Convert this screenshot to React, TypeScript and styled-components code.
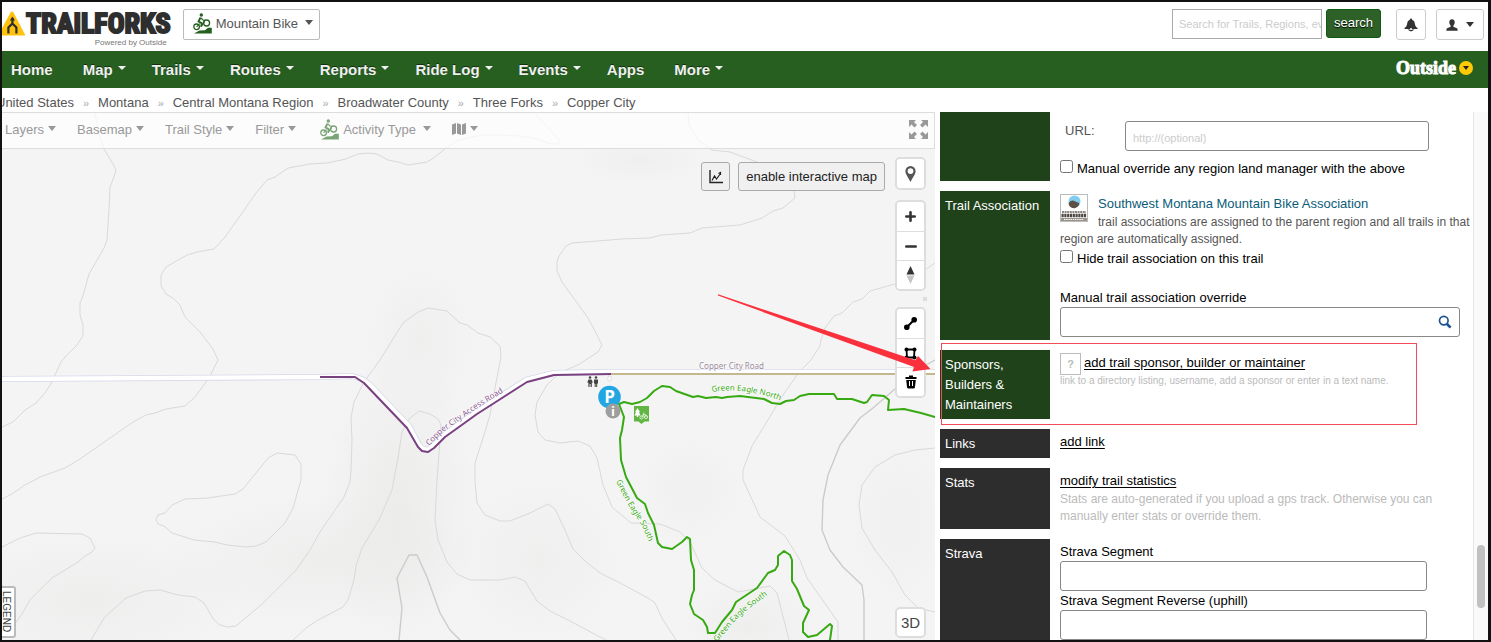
import React from "react";
import styled, { createGlobalStyle } from "styled-components";

const GlobalStyle = createGlobalStyle`
  *, *::before, *::after { box-sizing: border-box; }
  body {
    margin: 0;
    background: #111;
    color: #000;
    font: 13px/20px "Liberation Sans", Arial, sans-serif;
  }
  button, input { font-family: inherit; margin: 0; }
`;

const Page = styled.div`
  display: flex;
  flex-direction: column;
  height: 100vh;
  padding: 2px 3px 2px 2px;
  overflow: hidden;
`;

const Header = styled.header`
  flex: none;
  display: flex;
  align-items: flex-start;
  height: 49px;
  padding-right: 4px;
  background: #fff;
`;

const Brand = styled.a`
  display: grid;
  grid-template-columns: 24px auto;
  padding-top: 9px;
  color: #2e2e2e;
  text-decoration: none;
`;

const BrandName = styled.span`
  font: bold 28px/26px "Liberation Sans Narrow", "Roboto Condensed", "Open Sans Condensed", "DejaVu Sans Condensed", sans-serif;
  -webkit-text-stroke: 2px #2e2e2e;
`;

const BrandNote = styled.small`
  grid-column: 1 / -1;
  padding-right: 4px;
  font-size: 8px;
  line-height: 11px;
  text-align: right;
  color: #777;
`;

const ActivityButton = styled.button`
  display: flex;
  align-items: center;
  gap: 4px;
  height: 31px;
  margin: 7px 0 0 12px;
  padding: 0 6px 2px 9px;
  border: 1px solid #bbb;
  border-radius: 2px;
  background: #fff;
  color: #555;
  font-size: 13px;
`;

const HeaderTools = styled.div`
  display: flex;
  margin: 7px 0 0 auto;
`;

const SearchForm = styled.form`
  display: flex;
  gap: 4px;
  margin-right: 15px;
`;

const SearchInput = styled.input`
  width: 150px;
  height: 30px;
  padding: 0 0 0 6px;
  border: 1px solid #aaa;
  font-size: 11px;
  &::placeholder { color: #ccc; }
`;

const SearchButton = styled.button`
  width: 55px;
  height: 29px;
  padding: 0 0 2px;
  border: 1px solid #0f5a12;
  border-radius: 3px;
  background: #2d6128;
  color: #fff;
  font-size: 13px;
  text-shadow: 0 1px 1px #000;
`;

const IconButton = styled.button<{ $wide?: boolean }>`
  display: flex;
  align-items: center;
  justify-content: center;
  gap: 8px;
  width: ${(p) => (p.$wide ? 48 : 30)}px;
  height: 31px;
  margin-right: ${(p) => (p.$wide ? 0 : 10)}px;
  padding: 0;
  border: 1px solid #ccc;
  border-radius: 3px;
  background: #fff;
  color: #333;
`;

const Nav = styled.nav`
  flex: none;
  display: flex;
  align-items: center;
  height: 37px;
  padding: 0 15px 0 9px;
  background: #265f20;
`;

const NavLink = styled.a<{ $plain?: boolean }>`
  display: flex;
  align-items: center;
  gap: 5px;
  margin-right: ${(p) => (p.$plain ? 30 : 26)}px;
  color: #f0f0f0;
  font-size: 15px;
  font-weight: bold;
  text-decoration: none;
  text-shadow: 0 -1px 0 rgba(0, 0, 0, 0.5);
`;

const Outside = styled.a`
  display: flex;
  align-items: center;
  gap: 3px;
  margin-left: auto;
  padding-bottom: 3px;
  color: #fff;
  font: bold 18px/20px "Liberation Serif", serif;
  -webkit-text-stroke: 1px #fff;
  text-decoration: none;
`;

const OutsideBadge = styled.span`
  display: grid;
  place-items: center;
  width: 14px;
  height: 14px;
  border-radius: 50%;
  background: #ffc906;
  color: #222;
`;

const Caret = styled.span<{ $half?: number; $tall?: number; $lift?: number; $space?: number }>`
  flex: none;
  width: 0;
  height: 0;
  margin-left: ${(p) => p.$space ?? 0}px;
  margin-bottom: ${(p) => p.$lift ?? 0}px;
  border: solid transparent;
  border-width: ${(p) => p.$tall ?? 4}px ${(p) => p.$half ?? 4}px 0;
  border-top-color: currentColor;
`;

const Crumbs = styled.nav`
  flex: none;
  display: flex;
  gap: 9px;
  height: 24px;
  padding-top: 5px;
  background: #fff;
  overflow: hidden;
`;

const Crumb = styled.a`
  color: #555;
  text-decoration: none;
  white-space: nowrap;
  &:first-child { margin-left: -6px; }
`;

const CrumbMark = styled.span`
  width: 6px;
  color: #aaa;
  font-size: 11px;
`;

const Main = styled.main`
  flex: 1;
  min-height: 0;
  display: flex;
  gap: 5px;
  background: #fff;
`;

const MapArea = styled.section`
  position: relative;
  flex: 1;
  min-width: 0;
  background: #f4f4f4;
  overflow: hidden;
`;

const MapDrawing = styled.svg`
  display: block;
  width: 100%;
  height: 100%;
`;

const MapMark = styled.svg`
  position: absolute;
  inset: 0;
  width: 100%;
  height: 100%;
  pointer-events: none;
`;

const MapBar = styled.div`
  position: absolute;
  inset: 0 0 auto 0;
  display: flex;
  align-items: center;
  gap: 21px;
  height: 37px;
  padding: 0 6px 3px 3px;
  border: solid #ddd;
  border-width: 1px 1px 1px 0;
  background: rgba(255, 255, 255, 0.7);
`;

const MapMenu = styled.button<{ $before?: string }>`
  display: flex;
  align-items: center;
  gap: 4px;
  padding: 0;
  border: 0;
  background: none;
  color: #999;
  font-size: 13px;
  margin-left: ${(p) => p.$before ?? "0"};
`;

const MapTools = styled.div`
  position: absolute;
  top: 45px;
  right: 9px;
  display: flex;
  align-items: flex-start;
`;

const FlatButton = styled.button<{ $square?: boolean }>`
  display: grid;
  place-items: center;
  width: ${(p) => (p.$square ? "29px" : "auto")};
  height: 29px;
  margin-top: 5px;
  margin-right: ${(p) => (p.$square ? 8 : 10)}px;
  padding: 0 7px;
  border: 1px solid #aaa;
  border-radius: 3px;
  background: #f0f0f0;
  color: #222;
  font-size: 13px;
`;

const ControlColumn = styled.div`
  display: flex;
  flex-direction: column;
  gap: 10px;
  width: 31px;
`;

const ControlGroup = styled.div<{ $after?: number }>`
  display: flex;
  flex-direction: column;
  margin-bottom: ${(p) => p.$after ?? 0}px;
  border: 2px solid #ddd;
  border-radius: 5px;
  background: #fff;
`;

const Control = styled.button`
  display: grid;
  place-items: center;
  height: 29px;
  padding: 0;
  border: 0;
  border-radius: 4px;
  background: #fff;
  color: #222;
  & + & { border-top: 1px solid #ddd; border-radius: 0 0 4px 4px; }
`;

const ThreeD = styled.button`
  position: absolute;
  right: 9px;
  bottom: 2px;
  width: 31px;
  height: 31px;
  padding: 0;
  border: 2px solid #ddd;
  border-radius: 5px;
  background: #fff;
  color: #444;
  font-size: 15px;
`;

const Legend = styled.button`
  position: absolute;
  left: -6px;
  bottom: 2px;
  height: 52px;
  width: 20px;
  padding: 0;
  border: 2px solid #bbb;
  border-radius: 3px;
  background: #fff;
  color: #444;
  font-size: 10px;
  writing-mode: vertical-rl;
`;

const Panel = styled.section`
  flex: none;
  display: flex;
  width: 548px;
`;

const Rows = styled.form`
  flex: 1;
  display: flex;
  flex-direction: column;
  gap: 10px;
  overflow: hidden;
`;

const Row = styled.div<{ $height: number; $boxed?: boolean }>`
  position: relative;
  flex: none;
  display: grid;
  grid-template-columns: 110px 1fr;
  column-gap: 10px;
  min-height: ${(p) => p.$height}px;
  &::after {
    content: ${(p) => (p.$boxed ? '""' : "none")};
    position: absolute;
    inset: -7px 56px -6px 1px;
    border: 1px solid #f24b57;
  }
`;

const RowTitle = styled.div<{ $green?: boolean }>`
  padding: 5px 5px 4px;
  background: ${(p) => (p.$green ? "#1f421b" : "#2d2d2d")};
  color: #fff;
`;

const RowBody = styled.div<{ $top?: number }>`
  min-width: 0;
  padding: ${(p) => p.$top ?? 3}px 3px 0 0;
`;

const UrlLine = styled.div`
  display: flex;
  padding-left: 5px;
  margin-bottom: 8px;
`;

const UrlLabel = styled.label`
  width: 60px;
  color: #555;
`;

const Input = styled.input<{ $width: number }>`
  display: block;
  width: ${(p) => p.$width}px;
  height: 30px;
  padding: 4px 7px 0;
  border: 1px solid #888;
  border-radius: 3px;
  background: #fff;
  font-size: 11px;
  &::placeholder { color: #ccc; }
`;

const CheckLine = styled.label`
  display: flex;
  gap: 4px;
  line-height: 19px;
  & input { width: 13px; height: 13px; margin-top: 1px; }
`;

const FieldLabel = styled.label<{ $gap?: number }>`
  display: block;
  margin-top: ${(p) => p.$gap ?? 0}px;
  line-height: 19px;
`;

const Association = styled.div`
  margin-bottom: 1px;
  & svg { float: left; margin-right: 10px; }
`;

const AssociationLink = styled.a`
  color: #0b5c78;
  text-decoration: none;
`;

const Note = styled.p<{ $faint?: boolean; $size?: number; $right?: number }>`
  margin: 0;
  padding-right: ${(p) => p.$right ?? 0}px;
  color: ${(p) => (p.$faint ? "#bbb" : "#555")};
  font-size: ${(p) => p.$size ?? 12}px;
  line-height: 17px;
`;

const Finder = styled.div`
  position: relative;
  width: 400px;
`;

const FinderIcon = styled.svg`
  position: absolute;
  top: 8px;
  right: 8px;
`;

const SponsorLine = styled.div`
  display: flex;
  gap: 3px;
  height: 19px;
`;

const HelpButton = styled.button`
  width: 21px;
  height: 22px;
  padding: 0;
  border: 1px solid #bbb;
  background: #fff;
  color: #bbb;
  font-size: 11px;
  font-weight: bold;
`;

const TextLink = styled.a`
  color: #000;
  text-decoration: underline;
  text-underline-offset: 2px;
`;

const ScrollTrack = styled.div`
  flex: none;
  width: 15px;
  padding-left: 3px;
  border-left: 1px solid #e6e6e6;
  background: #fafafa;
`;

const ScrollThumb = styled.div`
  width: 8px;
  height: 63px;
  margin-top: 433px;
  border-radius: 4px;
  background: #c1c1c1;
`;

const BikeIcon = ({ color = "#265f20" }: { color?: string }) => (
  <svg width="19" height="21" viewBox="0 0 19 21" fill="none" stroke={color} aria-hidden="true">
    <circle cx="8.3" cy="2" r="1.7" fill={color} stroke="none" />
    <circle cx="3.6" cy="13.8" r="2.8" strokeWidth="1.3" />
    <circle cx="13.6" cy="10" r="3" strokeWidth="1.3" />
    <path d="M7.6 4.6L5.4 8.4L9 10.4L8 13.6" strokeWidth="1.9" strokeLinejoin="round" />
    <path d="M8 5l2.2 2.2h2.4M3.6 13.8L6.6 10.6M8 13.8l3.8-5.4" strokeWidth="1.1" />
    <path d="M1 20.6L6.5 17.6L12 17.2L15 14.8H18.8V20.6Z" fill={color} stroke="none" />
  </svg>
);

const CONTOURS = [
  "95,112 98,130 104,149 113,164 116,170 114,177 110,187 109,210 107,240 104,248 89,274 83,296 80,303 80,315 83,325 83,336 77,345 66,356 61,362 55,375 52,382 45,393 36,403 25,410 13,422 2,427",
  "534,112 550,130 560,141 558,144 550,144 538,139 520,136 500,135 485,135 470,137 457,141 446,148 435,157 427,162 408,165 398,162 388,160 377,154 368,153 358,154 346,159 327,163 310,164 288,168 275,177 267,180 256,193 240,216 225,237 214,249 197,252 187,255 166,267 161,275 161,286 166,294 174,299 180,305 185,317 200,332 213,349 218,360 210,376 206,382 195,397 185,406 166,409 155,413 146,415 133,422 110,438 80,459 65,468 40,477 25,485 12,494 2,499",
  "2,547 20,538 36,533 82,534 90,538 95,548 92,552 85,556 78,562 52,578 30,600 22,614 14,625",
  "158,515 165,513 172,505 185,499 208,498 235,494 243,489 268,458 277,453 295,455 301,464 301,480 293,508 285,523 266,542 256,546 246,547 227,545 215,542 194,540 172,533 164,526 158,524 156,520 158,515",
  "91,640 104,618 126,598 145,591 160,590 178,595 195,597 204,603 214,620 220,625 228,627 236,626 262,604 296,570 310,550 320,532 344,497 350,482 351,470 352,440 351,418 354,402 364,382 380,360 403,323 418,312 428,308 447,311 460,323 467,325 478,333 490,337 500,346 501,357 494,393 490,415 484,435 475,463 475,482 477,503 485,515 500,521 510,521 530,513 548,504 555,509 565,530 573,549 585,561 600,573 620,583 648,598 655,603 662,618 676,640",
  "293,640 306,628 318,620 343,607 348,600 354,580 356,566 362,548 379,520 392,490 398,458 402,432 409,419 419,411 430,414 438,419 441,425 440,440 437,480 435,520 438,540 447,562 457,574 470,580 500,580 515,577 525,581 537,601 550,611 570,621 585,629 600,637 606,640",
  "688,112 689,125 698,140 712,150 730,152 757,162 780,176 794,190 795,198 783,208 773,211 762,218 740,225 702,228 690,233 661,235 650,238 620,239 610,240 572,243 566,246 559,256 557,262 557,271 562,282 570,293 588,318 596,333 602,345 598,352 590,357 580,364 566,370 555,377 547,385 537,402 535,415 538,432 545,440 560,443 578,441 590,446 597,458 603,485 612,507 631,523 660,524 680,532 690,542 702,568 715,580 738,592 770,586 777,593 789,640",
  "935,263 925,270 895,284 870,291 862,299 853,302 842,313 834,316 825,328 821,340 820,346 811,360 800,371 785,392 752,446 743,470 743,480 750,495 760,517 785,536 800,560 807,578 838,622 838,640",
  "935,448 915,450 895,455 875,467 862,485 859,505 862,528 875,550 892,572 905,595 918,608 935,612",
];

const MAJOR_CONTOURS = [
  "935,360 915,371 896,388 873,408 860,418 840,445 828,475 823,500 822,530 830,550 843,567 862,585 864,600 864,640",
  "399,640 402,608 397,578 409,555 417,555 427,577 440,613 450,630 460,640",
];

const ROAD_CASING =
  "0,379 320,377 352,376 362,379 370,385 409,426 419,445 423,449 428,450 433,446 444,435 476,412 526,380 554,373 611,372 940,372";

const ACCESS_ROAD =
  "320,377 355,377 364,383 407,428 418,447 422,451 428,452 434,448 445,437 477,414 527,382 554,375 611,374";

const GREEN_TRAILS = [
  "619,404 624,402 632,404 640,402 647,398 654,391 662,386 670,387 676,391 693,397 698,396 706,398 716,397 722,398 727,397 740,396 764,399 772,403 780,404 786,401 794,400 800,396 809,394 834,394 837,399 852,399 864,403 867,402 872,395 884,396 889,400 888,410 904,409 921,413 935,417",
  "619,404 624,417 622,430 620,438 621,460 626,477 637,498 645,504 648,513 654,525 658,543 662,547 672,549 682,542 687,537 690,539 691,560 694,570 694,590 692,595 690,604 694,614 703,620 707,627 708,633 715,633 722,622 732,610 736,602 757,588 768,573 775,570 778,565 778,556 784,551 790,555 792,560 792,581 797,589 804,606 809,610 803,623 803,632 808,637 817,635 830,624 832,626 830,640",
];

const SHADES = [
  { x: 400, y: 500, rx: 80, ry: 150, o: 0.4 },
  { x: 320, y: 560, rx: 160, ry: 70, o: 0.3 },
  { x: 420, y: 340, rx: 60, ry: 80, o: 0.25 },
  { x: 90, y: 600, rx: 160, ry: 70, o: 0.3 },
  { x: 540, y: 560, rx: 90, ry: 90, o: 0.25 },
  { x: 640, y: 160, rx: 70, ry: 25, o: 0.25 },
  { x: 690, y: 490, rx: 60, ry: 60, o: 0.2 },
  { x: 750, y: 625, rx: 70, ry: 50, o: 0.3 },
  { x: 900, y: 520, rx: 60, ry: 90, o: 0.2 },
];

const TrailMap = () => (
  <MapDrawing viewBox="2 112 933 528" preserveAspectRatio="xMinYMin slice" role="img" aria-label="Trail map of Copper City">
    <defs>
      <radialGradient id="shade">
        <stop offset="0" stopColor="#e0e0de" />
        <stop offset="1" stopColor="#e0e0de" stopOpacity="0" />
      </radialGradient>
      <path id="accessLabel" d="M429 446L443 432L476 409L510 388" />
      <path id="northLabel" d="M712 392Q745 386 790 404" />
      <path id="southLabel" d="M616 481Q629 508 637 518T655 560" />
      <path id="southLabel2" d="M717 642L735 621Q745 610 775 590" />
    </defs>
    {SHADES.map((s, i) => (
      <ellipse key={i} cx={s.x} cy={s.y} rx={s.rx} ry={s.ry} fill="url(#shade)" opacity={s.o} />
    ))}
    <g fill="none" strokeLinejoin="round" strokeLinecap="round">
      {CONTOURS.map((c, i) => (
        <polyline key={i} points={c} stroke="#d9d9d9" />
      ))}
      {MAJOR_CONTOURS.map((c, i) => (
        <polyline key={i} points={c} stroke="#cbcbcb" strokeWidth="1.4" />
      ))}
      <polyline points={ROAD_CASING} stroke="#d6d9ea" strokeWidth="6" />
      <polyline points={ROAD_CASING} stroke="#fff" strokeWidth="4.4" />
      <path d="M611 374H940" stroke="#c5b78e" strokeWidth="2" />
      <polyline points={ACCESS_ROAD} stroke="#7a4180" strokeWidth="2" strokeLinecap="butt" />
      <rect x="608" y="376" width="3" height="5" rx="1" fill="#fff" stroke="#ccc" strokeWidth="0.6" />
      {GREEN_TRAILS.map((t, i) => (
        <polyline key={i} points={t} stroke="#37a912" strokeWidth="2" />
      ))}
    </g>
    <g fontFamily="'Noto Sans', 'Open Sans', sans-serif" fontSize="8" stroke="#fff" strokeWidth="1" paintOrder="stroke">
      <text fill="#8a5a90"><textPath href="#accessLabel">Copper City Access Road</textPath></text>
      <text x="699" y="369" fill="#98889a">Copper City Road</text>
      <text fill="#37a912"><textPath href="#northLabel">Green Eagle North</textPath></text>
      <text fill="#37a912"><textPath href="#southLabel">Green Eagle South</textPath></text>
      <text fill="#37a912"><textPath href="#southLabel2">Green Eagle South</textPath></text>
    </g>
    <g fill="#444">
      <circle cx="590" cy="377.5" r="1.3" />
      <path d="M588.5 379.5h3l1.5 3h-1.2v4.5h-1.2v-3h-1v3h-1.2v-4.5h-1.2z" />
      <circle cx="596" cy="377.5" r="1.3" />
      <path d="M594 379.5h4v4h-.8v3.5h-1v-3h-.5v3h-1v-3.5h-.7z" />
    </g>
    <circle cx="609.5" cy="397" r="11.3" fill="#22a7e3" />
    <text x="609.5" y="403" textAnchor="middle" fontFamily="'Open Sans', sans-serif" fontSize="17" fontWeight="bold" fill="#fff">P</text>
    <circle cx="613" cy="411" r="7.5" fill="#9e9e9e" />
    <text x="613" y="416" textAnchor="middle" fontFamily="'Open Sans', sans-serif" fontSize="13" fontWeight="bold" fill="#fff">i</text>
    <path d="M634 406h15v15.5h-4.500l-3 2.5-3-2.5H634z" fill="#61b643" />
    <path d="M637.5 408l2.5 4h-1l1.5 3.5h-2.3v1.5h-1.4v-1.5h-2.3l1.5-3.5h-1z" fill="#fff" />
    <g fill="none" stroke="#d6efcd">
      <circle cx="641.5" cy="417.5" r="1.6" />
      <circle cx="646" cy="417" r="1.6" />
      <path d="M641.5 417.5l2-3h2l.5 2.5M644 412.5l-1 2.5 1.500 2" />
    </g>
  </MapDrawing>
);

const NAV_ITEMS = ["Home", "Map", "Trails", "Routes", "Reports", "Ride Log", "Events", "Apps", "More"];
const PLAIN_ITEMS = ["Home", "Apps"];
const MAP_MENUS = ["Layers", "Basemap", "Trail Style", "Filter"];
const CRUMBS = ["United States", "Montana", "Central Montana Region", "Broadwater County", "Three Forks", "Copper City"];

export default function App() {
  return (
    <Page>
      <GlobalStyle />
      <Header>
        <Brand href="#">
          <svg width="24" height="25" viewBox="0 0 24 25" aria-hidden="true">
            <path d="M-4 24.5L8.5 1.5Q10 -.5 11.5 1.5L23.5 24.5Z" fill="#ffc20e" />
            <path d="M6.400 22.5V16.5L10.400 12.5V7M14.400 22.5V16.5L10.400 12.5" fill="none" stroke="#2e2e2e" strokeWidth="2.2" />
            <path d="M7.800 9.5L10.400 5.5L13 9.5Z" fill="#2e2e2e" />
          </svg>
          <BrandName>TRAILFORKS</BrandName>
          <BrandNote>Powered by Outside</BrandNote>
        </Brand>
        <ActivityButton type="button">
          <BikeIcon />
          Mountain Bike
          <Caret $tall={5} $lift={2} $space={3} />
        </ActivityButton>
        <HeaderTools>
          <SearchForm>
            <SearchInput type="text" aria-label="Search" placeholder="Search for Trails, Regions, events" />
            <SearchButton type="button">search</SearchButton>
          </SearchForm>
          <IconButton type="button" aria-label="Notifications">
            <svg width="14" height="14" viewBox="0 0 14 14" fill="currentColor">
              <path d="M7 .5c.7 0 1.1.5 1.1 1.2C10 2.300 10.600 4 10.900 6c.3 2 1 2.900 2.600 4v1H.5v-1C2.100 8.900 2.800 8 3.100 6 3.400 4 4 2.300 5.900 1.700 5.900 1 6.300.5 7 .5z" />
              <path d="M3.500 11.500h7L9 12.500 7 13.500 5 12.500z" />
              <circle cx="7" cy="11" r="1" fill="#fff" />
            </svg>
          </IconButton>
          <IconButton type="button" $wide aria-label="Account">
            <svg width="12" height="12" viewBox="0 0 12 12" fill="currentColor">
              <path d="M6 .3c1.700 0 2.700 1.200 2.700 3 0 1.300-.5 2.500-1.300 3.200v1.200l3.400 1.500c.6.3.8.7.8 1.300v1.200H.4v-1.200c0-.6.2-1 .8-1.300l3.400-1.500V6.500C3.800 5.800 3.300 4.600 3.300 3.300c0-1.800 1-3 2.700-3z" />
            </svg>
            <Caret $tall={5} />
          </IconButton>
        </HeaderTools>
      </Header>

      <Nav>
        {NAV_ITEMS.map((item) => (
          <NavLink key={item} href="#" $plain={PLAIN_ITEMS.includes(item)}>
            {item}
            {!PLAIN_ITEMS.includes(item) && <Caret $lift={3} />}
          </NavLink>
        ))}
        <Outside href="#">
          Outside
          <OutsideBadge><Caret $half={3} /></OutsideBadge>
        </Outside>
      </Nav>

      <Crumbs aria-label="Breadcrumb">
        {CRUMBS.map((crumb, i) => (
          <React.Fragment key={crumb}>
            {i > 0 && <CrumbMark>»</CrumbMark>}
            <Crumb href="#">{crumb}</Crumb>
          </React.Fragment>
        ))}
      </Crumbs>

      <Main>
        <MapArea>
          <TrailMap />
          <MapBar>
            {MAP_MENUS.map((menu) => (
              <MapMenu key={menu} type="button">
                {menu}
                <Caret $tall={5} $lift={2} />
              </MapMenu>
            ))}
            <MapMenu type="button" $before="3px">
              <BikeIcon color="#7aa376" />
              Activity Type
              <Caret $tall={5} $lift={2} $space={3} />
            </MapMenu>
            <MapMenu type="button" aria-label="Map view">
              <svg width="14" height="12" viewBox="0 0 14 12" fill="currentColor">
                <path d="M0 1.500L4 0v10.500L0 12zM5 0l4 1.500V12L5 10.500zM10 1.500L14 0v10.500L10 12z" />
              </svg>
              <Caret $tall={5} $lift={2} />
            </MapMenu>
            <MapMenu type="button" $before="auto" aria-label="Full screen">
              <svg width="19" height="19" viewBox="0 0 19 19" fill="currentColor">
                <path d="M0 0h7L5 2l3 3-2.500 2.500-3-3L0 7zM19 0v7l-2.500-2.500-3 3L11 5l3-3-2-2zM0 19v-7l2.500 2.500 3-3L8 14l-3 3 2 2zM19 19h-7l2-2-3-3 2.500-2.500 3 3L19 12z" />
              </svg>
            </MapMenu>
          </MapBar>

          <MapTools>
            <FlatButton type="button" $square aria-label="Elevation chart">
              <svg width="14" height="14" viewBox="0 0 14 14" fill="none" stroke="currentColor" strokeWidth="1.4">
                <path d="M1 0v12.500h13" />
                <path d="M3 10.500L5.500 6l2 3L11.500 3.500M9.500 3.500l2-1v2.500" strokeWidth="1.2" />
              </svg>
            </FlatButton>
            <FlatButton type="button">enable interactive map</FlatButton>
            <ControlColumn>
              <ControlGroup>
                <Control type="button" aria-label="My location">
                  <svg width="11" height="16" viewBox="0 0 11 16" fill="#555" fillRule="evenodd">
                    <path d="M5.500 0A5.100 5.100 0 0 1 10.600 5.200C10.600 8 8.500 10 5.500 16 2.500 10 .4 8 .4 5.200A5.100 5.100 0 0 1 5.500 0zM5.500 2.200a2.900 2.900 0 1 0 0 5.800 2.900 2.900 0 0 0 0-5.800z" />
                  </svg>
                </Control>
              </ControlGroup>
              <ControlGroup $after={6}>
                <Control type="button" aria-label="Zoom in">
                  <svg width="11" height="11" viewBox="0 0 11 11" fill="none" stroke="#333" strokeWidth="2.6" strokeLinecap="round">
                    <path d="M1.300 5.500h8.400M5.500 1.300v8.400" />
                  </svg>
                </Control>
                <Control type="button" aria-label="Zoom out">
                  <svg width="12" height="11" viewBox="0 0 12 11" fill="none" stroke="#333" strokeWidth="2.6" strokeLinecap="round">
                    <path d="M1.300 5.500h9.400" />
                  </svg>
                </Control>
                <Control type="button" aria-label="Reset north">
                  <svg width="9" height="18" viewBox="0 0 9 18">
                    <path d="M4.500 0L8.500 8.500h-8z" fill="#333" />
                    <path d="M4.500 18L.5 9.500h8z" fill="#c4c4c4" />
                  </svg>
                </Control>
              </ControlGroup>
              <ControlGroup>
                <Control type="button" aria-label="Draw line">
                  <svg width="13" height="13" viewBox="0 0 13 13" stroke="#000" strokeWidth="2">
                    <path d="M3 10L10 3" />
                    <circle cx="2.8" cy="10.2" r="1.8" />
                    <circle cx="10.2" cy="2.8" r="1.8" />
                  </svg>
                </Control>
                <Control type="button" aria-label="Draw area">
                  <svg width="13" height="13" viewBox="0 0 13 13" fill="none" stroke="#000" strokeWidth="1.8">
                    <path d="M2.500 2.500h8l-.5 8h-7z" />
                    <g fill="#000" stroke="none">
                      <circle cx="2.5" cy="2.5" r="2" /><circle cx="10.5" cy="2.5" r="2" />
                      <circle cx="2.5" cy="10.5" r="2" /><circle cx="10.5" cy="10.5" r="2" />
                    </g>
                  </svg>
                </Control>
                <Control type="button" aria-label="Delete">
                  <svg width="12" height="14" viewBox="0 0 12 14">
                    <path d="M4 .5h4V2h3.500v2H.5V2H4zM1.200 5h9.600l-.8 7q-.2 1.500-1.500 1.500h-5Q2.200 13.500 2 12z" fill="#000" />
                    <path d="M4.500 6v5M7.500 6v5" stroke="#fff" />
                  </svg>
                </Control>
              </ControlGroup>
            </ControlColumn>
          </MapTools>
          <Legend type="button">LEGEND</Legend>
          <ThreeD type="button">3D</ThreeD>
          <MapMark viewBox="2 112 933 528" preserveAspectRatio="xMaxYMin slice" aria-hidden="true">
            <rect x="923" y="297" width="4" height="4" fill="#ddd" />
            <path d="M718 294.300L915.500 360.200L918 356L930.500 369L912.500 371.500L914 367L718 295.600Z" fill="#fa303c" />
          </MapMark>
        </MapArea>

        <Panel>
          <Rows>
            <Row $height={69}>
              <RowTitle $green />
              <RowBody $top={9}>
                <UrlLine>
                  <UrlLabel htmlFor="url">URL:</UrlLabel>
                  <Input id="url" $width={304} placeholder="http://(optional)" />
                </UrlLine>
                <CheckLine><input type="checkbox" />Manual override any region land manager with the above</CheckLine>
              </RowBody>
            </Row>

            <Row $height={149}>
              <RowTitle $green>Trail Association</RowTitle>
              <RowBody>
                <Association>
                  <svg width="28" height="28" viewBox="0 0 28 28" aria-hidden="true">
                    <rect x=".5" y=".5" width="27" height="27" fill="#fff" stroke="#bbb" />
                    <circle cx="14.5" cy="7.5" r="6" fill="#82cdef" />
                    <path d="M8.500 9.500Q10 6.500 13 6.500L19 9Q20 12 15 14.200Q9.500 14.500 8.500 9.500Z" fill="#5d5046" />
                    <path d="M2 18h24" stroke="#8b837c" strokeWidth="2" strokeDasharray="2 .6" />
                    <path d="M1.500 21.500h25" stroke="#4d4640" strokeWidth="3.6" strokeDasharray="2.2 .6" />
                    <path d="M1 25.500h26" stroke="#9a938c" strokeWidth="3" />
                    <path d="M4 25.500h20" stroke="#fff" strokeWidth="1.2" strokeDasharray="1.4 .8" />
                  </svg>
                  <AssociationLink href="#">Southwest Montana Mountain Bike Association</AssociationLink>
                  <Note>trail associations are assigned to the parent region and all trails in that region are automatically assigned.</Note>
                </Association>
                <CheckLine><input type="checkbox" />Hide trail association on this trail</CheckLine>
                <FieldLabel htmlFor="override" $gap={20}>Manual trail association override</FieldLabel>
                <Finder>
                  <Input id="override" $width={400} />
                  <FinderIcon width="14" height="14" viewBox="0 0 14 14" fill="none" stroke="#1c5392">
                    <circle cx="5.8" cy="5.6" r="4.3" strokeWidth="1.7" />
                    <path d="M9 9l3.600 3.600" strokeWidth="2.6" />
                  </FinderIcon>
                </Finder>
              </RowBody>
            </Row>

            <Row $height={69} $boxed>
              <RowTitle $green>Sponsors, Builders &amp; Maintainers</RowTitle>
              <RowBody>
                <SponsorLine>
                  <HelpButton type="button">?</HelpButton>
                  <TextLink href="#">add trail sponsor, builder or maintainer</TextLink>
                </SponsorLine>
                <Note $faint $size={10}>link to a directory listing, username, add a sponsor or enter in a text name.</Note>
              </RowBody>
            </Row>

            <Row $height={29}>
              <RowTitle>Links</RowTitle>
              <RowBody><TextLink href="#">add link</TextLink></RowBody>
            </Row>

            <Row $height={61}>
              <RowTitle>Stats</RowTitle>
              <RowBody>
                <TextLink href="#">modify trail statistics</TextLink>
                <Note $faint $right={30}>Stats are auto-generated if you upload a gps track. Otherwise you can manually enter stats or override them.</Note>
              </RowBody>
            </Row>

            <Row $height={112}>
              <RowTitle>Strava</RowTitle>
              <RowBody>
                <FieldLabel htmlFor="segment">Strava Segment</FieldLabel>
                <Input id="segment" $width={367} />
                <FieldLabel htmlFor="reverse">Strava Segment Reverse (uphill)</FieldLabel>
                <Input id="reverse" $width={367} />
              </RowBody>
            </Row>
          </Rows>
          <ScrollTrack><ScrollThumb /></ScrollTrack>
        </Panel>
      </Main>
    </Page>
  );
}
